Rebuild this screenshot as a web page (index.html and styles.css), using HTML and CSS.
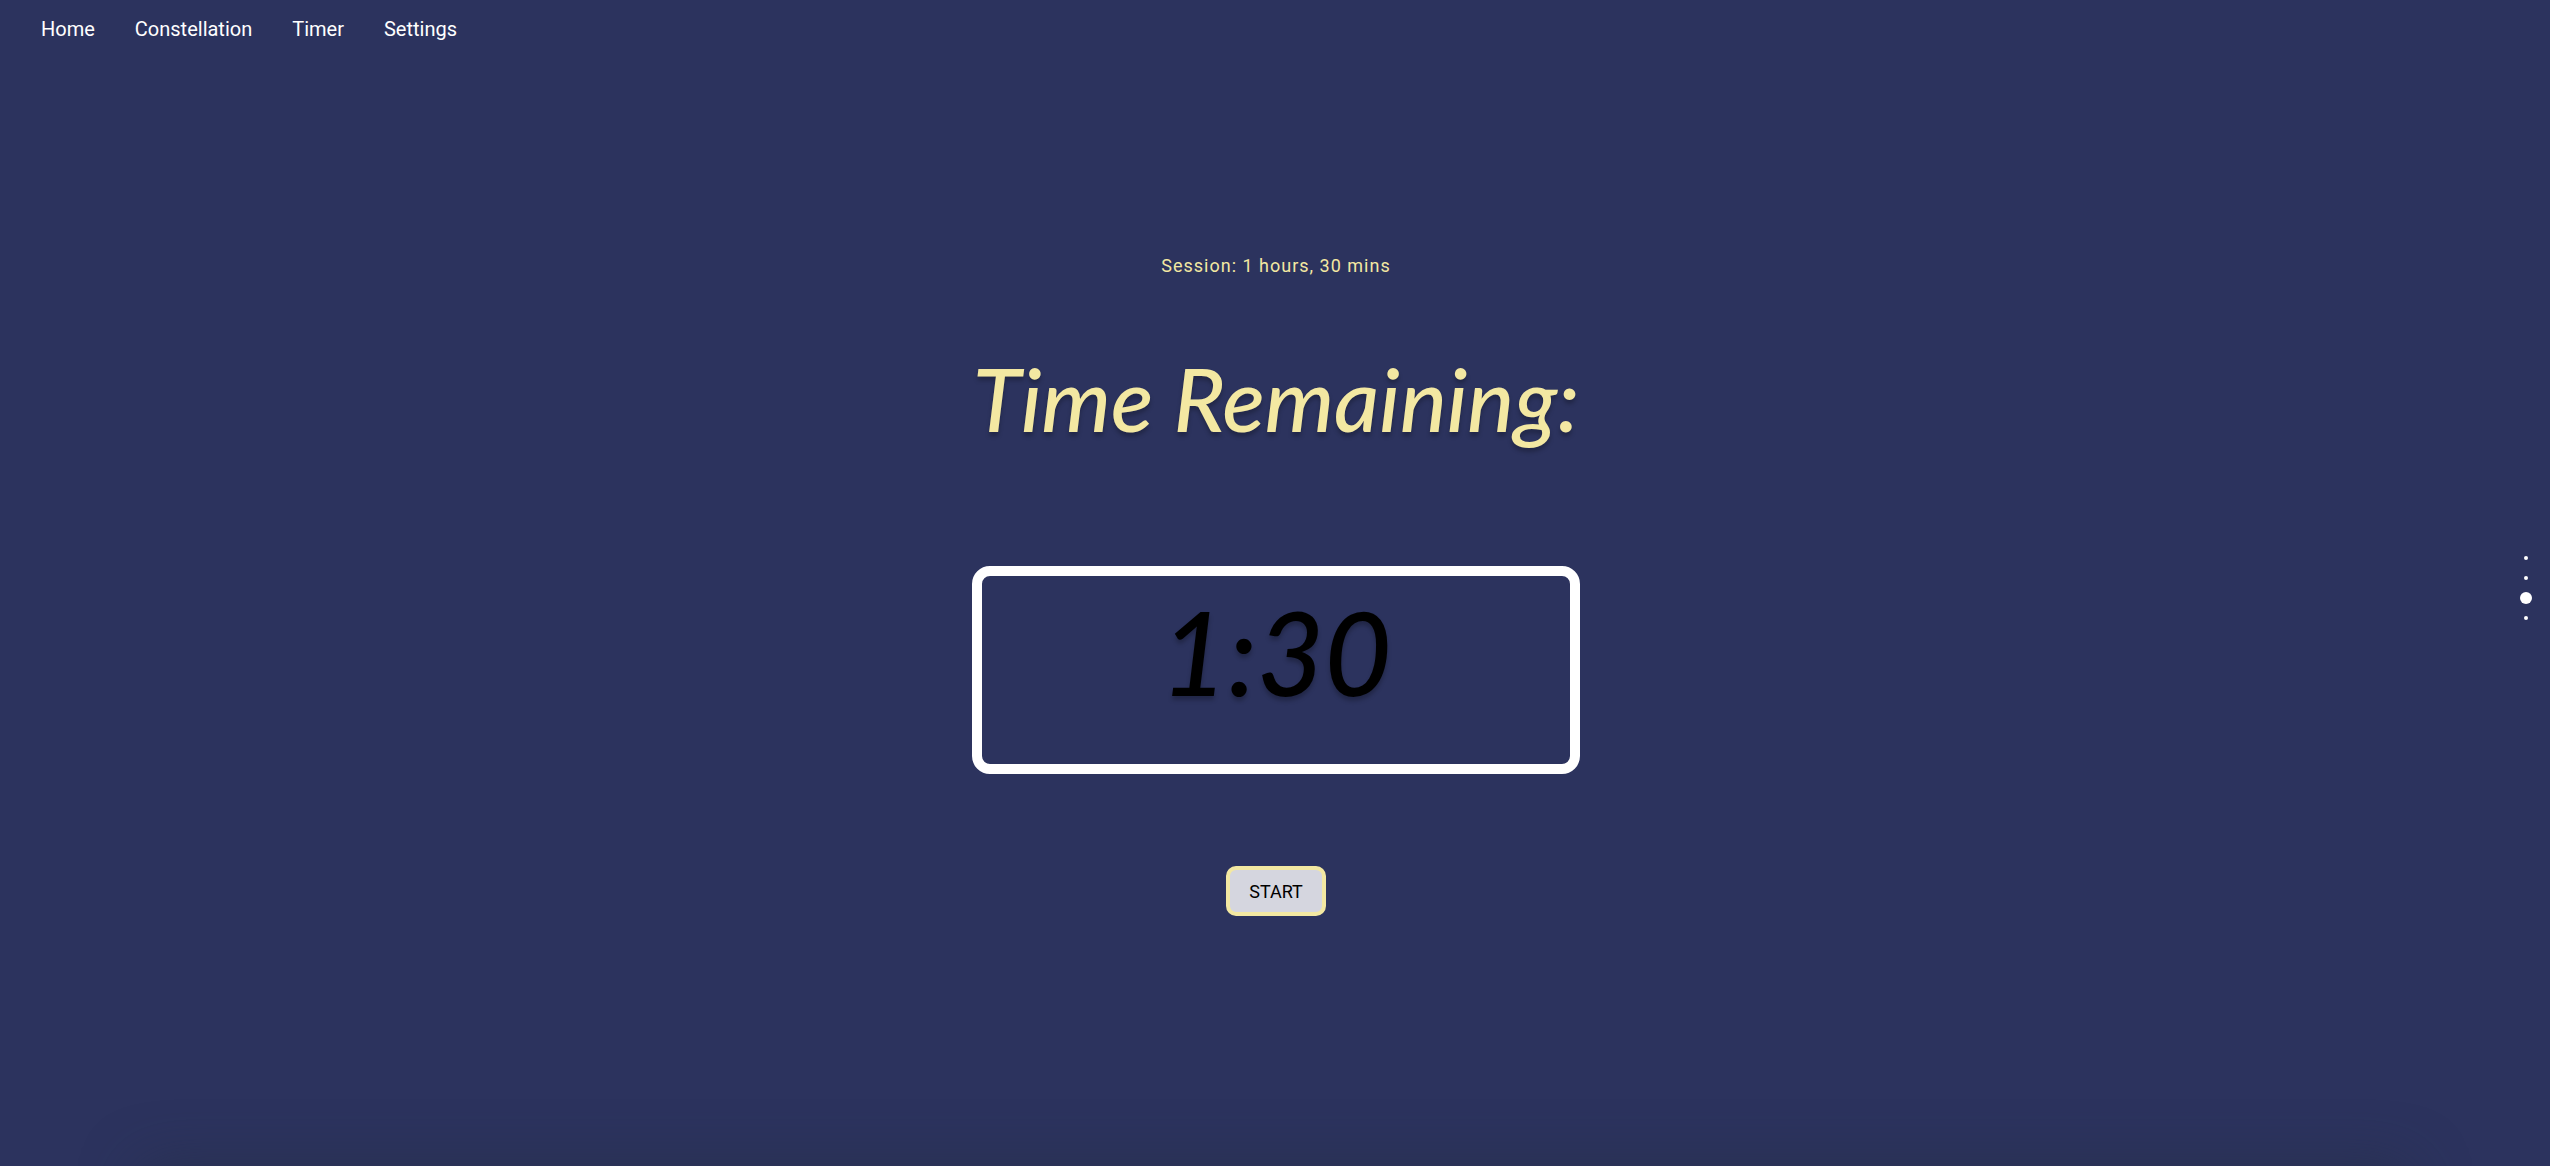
FILE: index.html
```html
<!DOCTYPE html>
<html lang="en">
<head>
<meta charset="utf-8">
<meta name="viewport" content="width=device-width, initial-scale=1">
<title>Timer</title>
<link rel="stylesheet" href="styles.css">
</head>
<body>
<div class="page">
  <nav class="menu">
    <a href="#home">Home</a>
    <a href="#constellation">Constellation</a>
    <a href="#timer">Timer</a>
    <a href="#settings">Settings</a>
  </nav>
  <main class="timer">
    <p class="session">Session: 1 hours, 30 mins</p>
    <h1 class="title">Time Remaining:</h1>
    <div class="clock">1:30</div>
    <button class="start" type="button">START</button>
  </main>
  <nav class="dots" aria-label="Sections">
    <a href="#home" aria-label="Home"></a>
    <a href="#constellation" aria-label="Constellation"></a>
    <a href="#timer" aria-label="Timer" class="active"></a>
    <a href="#settings" aria-label="Settings"></a>
  </nav>
</div>
</body>
</html>
```
FILE: styles.css
```css
* {
  box-sizing: border-box;
}

body {
  margin: 0;
  background: #2c335e;
  color: #fff;
  font-family: Roboto, sans-serif;
}

.page {
  position: relative;
  min-height: 100vh;
  overflow: hidden;
}

/* soft shadow cast upwards from below the fold */
.page::after {
  content: "";
  position: absolute;
  left: 140px;
  right: 140px;
  top: 100%;
  height: 100px;
  border-radius: 20px;
  box-shadow: 0 0 56px rgba(38, 48, 70, 0.6);
}

.menu {
  display: flex;
  gap: 40px;
  padding: 15px 41px;
  font-size: 20px;
  line-height: 28px;
}

.menu a {
  color: #fff;
  text-decoration: none;
}

.timer {
  display: flex;
  flex-direction: column;
  align-items: center;
  padding: 194px 20px 40px 22px;
}

.session {
  margin: 0;
  color: #f3e8a2;
  font-size: 18px;
  line-height: 28px;
  letter-spacing: 1px;
}

.title,
.clock {
  font-family: Satisfy, Lato, "Liberation Sans", cursive;
  font-style: italic;
  font-weight: 500;
  text-shadow: 0 4px 4px rgba(0, 0, 0, 0.25);
}

.title {
  margin: 52px 0 102px;
  color: #f3e8a2;
  font-size: 88px;
  line-height: 132px;
  text-align: center;
}

.clock {
  width: 608px;
  max-width: 100%;
  height: 208px;
  border: 10px solid #fff;
  border-radius: 18px;
  color: #000;
  font-size: 116px;
  line-height: 152px;
  text-align: center;
}

.start {
  width: 100px;
  height: 50px;
  margin-top: 92px;
  padding: 0;
  border: 4px solid #f3e8a2;
  border-radius: 10px;
  background: #d5d6df;
  color: #000;
  font-family: inherit;
  font-size: 18px;
}

.dots {
  position: fixed;
  top: 50%;
  right: 17px;
  display: flex;
  flex-direction: column;
  margin-top: -35px;
}

.dots a {
  display: grid;
  place-items: center;
  width: 14px;
  height: 20px;
}

.dots a::before {
  content: "";
  width: 4px;
  height: 4px;
  border-radius: 50%;
  background: #fff;
}

.dots .active::before {
  width: 12px;
  height: 12px;
}
```
